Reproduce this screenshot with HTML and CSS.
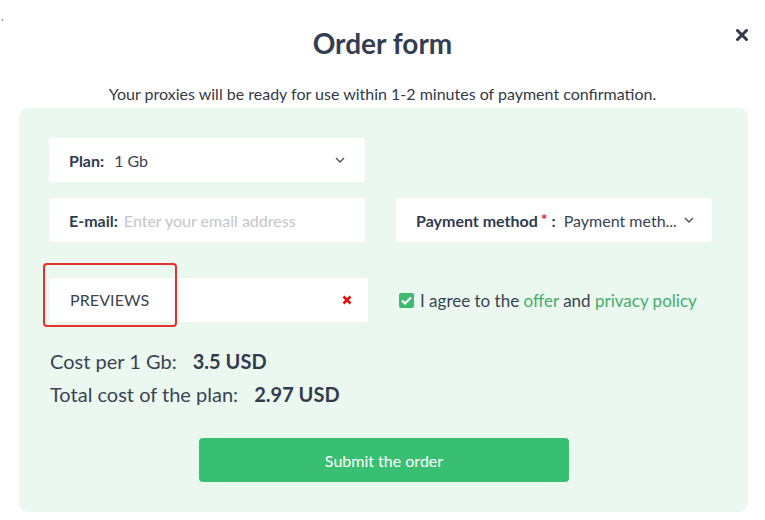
FILE: index.html
```html
<!DOCTYPE html>
<html lang="en">
<head>
<meta charset="utf-8">
<title>Order form</title>
<link rel="stylesheet" href="styles.css">
</head>
<body>
<span class="mark">,</span>
<div class="modal">
  <div class="modal-head">
    <h1>Order form</h1>
    <button class="close-btn" aria-label="Close">
      <svg width="12" height="12" viewBox="0 0 12 12"><path d="M1.5 1.5 L10.5 10.5 M10.5 1.5 L1.5 10.5" stroke="#2f3a4f" stroke-width="3" stroke-linecap="round"/></svg>
    </button>
  </div>
  <p class="subtitle">Your proxies will be ready for use within 1-2 minutes of payment confirmation.</p>

  <div class="panel">
    <div class="fields">
      <div class="field">
        <span class="label">Plan:</span>
        <span class="value">1 Gb</span>
        <svg class="chevron" width="10" height="6" viewBox="0 0 10 6"><path d="M1 1 L5 5 L9 1" fill="none" stroke="#4a5162" stroke-width="1.4"/></svg>
      </div>
      <div></div>

      <div class="field">
        <span class="label">E-mail:</span>
        <span class="placeholder">Enter your email address</span>
      </div>
      <div class="field">
        <span class="label pay">Payment method<span class="req">*</span>:</span>
        <span class="value">Payment meth...</span>
        <svg class="chevron small" width="10" height="6" viewBox="0 0 10 6"><path d="M1 1 L5 5 L9 1" fill="none" stroke="#4a5162" stroke-width="1.4"/></svg>
      </div>

      <div class="field promo">
        <span class="promo-text">PREVIEWS</span>
        <svg class="clear" width="10" height="10" viewBox="0 0 10 10"><path d="M1.5 1.5 L8.5 8.5 M8.5 1.5 L1.5 8.5" stroke="#e01010" stroke-width="2.6"/></svg>
        <span class="highlight"></span>
      </div>
      <label class="agree">
        <span class="checkbox">
          <svg width="11" height="9" viewBox="0 0 11 9"><path d="M1 4.5 L4 7.5 L10 1.5" fill="none" stroke="#fff" stroke-width="2.2"/></svg>
        </span>
        <span>I agree to the <a href="#">offer</a> and <a href="#">privacy policy</a></span>
      </label>
    </div>

    <div class="costs">
      <div>Cost per 1 Gb: <b>3.5 USD</b></div>
      <div>Total cost of the plan: <b>2.97 USD</b></div>
    </div>

    <button class="submit-btn">Submit the order</button>
  </div>
</div>
</body>
</html>
```

FILE: styles.css
```css
body {
  margin: 0;
  background: #fff;
  font-family: Lato, "Open Sans", sans-serif;
  color: #3a4354;
  position: relative;
}
.mark { position: absolute; left: 1px; top: 10px; font-size: 10px; color: #555; }
.modal { width: 765px; }
.modal-head { position: relative; height: 66px; }
.modal-head h1 {
  margin: 0; padding-top: 26px;
  text-align: center; font-size: 28px; font-weight: 700; color: #343e52;
  line-height: 34px;
}
.close-btn {
  position: absolute; right: 17px; top: 29px;
  background: none; border: none; padding: 0; cursor: pointer; line-height: 0;
}
.subtitle {
  margin: 18px 0 0; text-align: center; font-size: 16px; line-height: 20px; color: #333a47;
}
.panel {
  margin: 4px 17px 0 19px;
  background: #eaf8f0; border-radius: 9px;
  padding: 30px 36px 30px 30px;
}
.fields {
  display: grid;
  grid-template-columns: 316px 316px;
  column-gap: 31px; row-gap: 16px;
}
.field {
  height: 44px; background: #fff; border-radius: 3px;
  display: flex; align-items: center; padding: 0 20px;
  font-size: 16px; box-sizing: border-box; position: relative;
}
.field .label { font-weight: 700; color: #2f3a4f; margin-right: 10px; white-space: nowrap; }
.field .label.pay { margin-right: 8px; }
.field .value { color: #3a4354; white-space: nowrap; }
.field .placeholder { color: #c2c5c9; margin-left: -4px; white-space: nowrap; }
.req { color: #e02424; margin: 0 4px 0 3px; position: relative; top: -2px; }
.chevron { margin-left: auto; flex: none; }
.chevron.small { margin-left: 7px; }
.promo { margin-top: 20px; width: 319px; padding-left: 21px; padding-right: 16px; }
.promo-text { color: #3b4252; letter-spacing: 0.1px; position: relative; top: -1px; }
.clear { margin-left: auto; flex: none; }
.highlight {
  position: absolute; left: -6px; top: -15px; width: 134px; height: 64px;
  border: 2px solid #e53030; border-radius: 4px; box-sizing: border-box;
}
.agree {
  margin-top: 20px; display: flex; align-items: center;
  font-size: 17px; color: #3b4252; padding-left: 3px; white-space: nowrap;
}
.agree a { color: #45ad68; text-decoration: none; }
.checkbox {
  width: 15px; height: 15px; background: #3dbb70; border-radius: 2px; flex: none;
  display: inline-flex; align-items: center; justify-content: center; margin-right: 6px;
}
.costs { margin-top: 23px; font-size: 20px; line-height: 33px; color: #3a4354; padding-left: 1px; }
.costs b { margin-left: 11px; color: #333c4d; }
.submit-btn {
  display: block; margin: 27px 0 0 150px; width: 370px; height: 44px;
  background: #39bf71; color: #fff; border: none; border-radius: 4px;
  font-family: Lato, sans-serif; font-size: 16px; cursor: pointer;
}
```
